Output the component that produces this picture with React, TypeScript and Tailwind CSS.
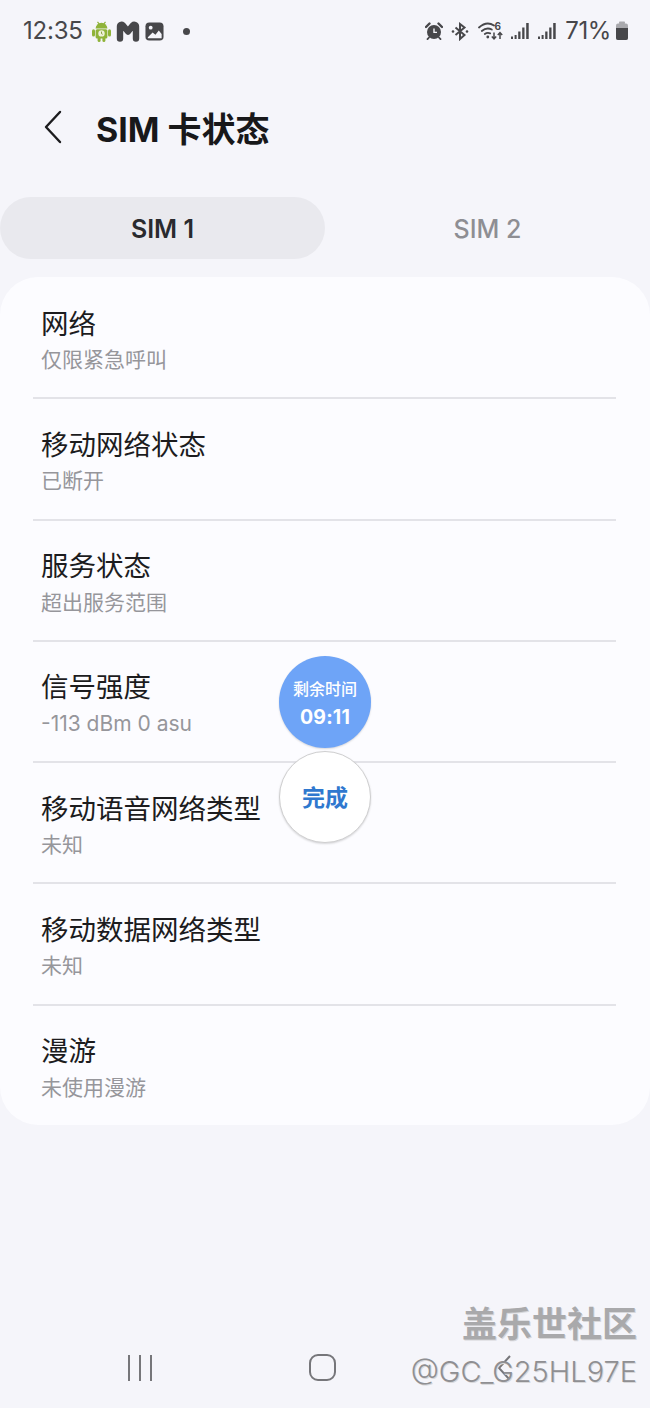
const FONT = "font-['Inter','Noto_Sans_CJK_SC',sans-serif]";

const rows = [
  { title: '网络', sub: '仅限紧急呼叫' },
  { title: '移动网络状态', sub: '已断开' },
  { title: '服务状态', sub: '超出服务范围' },
  { title: '信号强度', sub: '-113 dBm 0 asu' },
  { title: '移动语音网络类型', sub: '未知' },
  { title: '移动数据网络类型', sub: '未知' },
  { title: '漫游', sub: '未使用漫游' },
];

function AndroidIcon() {
  return (
    <svg width="19" height="21" viewBox="0 0 19 21">
      <path d="M3.6 7.6a5.9 5.9 0 0 1 11.8 0z" fill="#8fb339" />
      <path d="M5.5 0.8l1.8 2.4M13.5 0.8l-1.8 2.4" stroke="#8fb339" strokeWidth="1.2" />
      <rect x="3.6" y="8.2" width="11.8" height="9.2" rx="1.5" fill="#8fb339" />
      <rect x="0" y="8.2" width="3" height="7.4" rx="1.5" fill="#8fb339" />
      <rect x="16" y="8.2" width="3" height="7.4" rx="1.5" fill="#8fb339" />
      <rect x="5.6" y="16" width="3" height="5" rx="1.5" fill="#8fb339" />
      <rect x="10.4" y="16" width="3" height="5" rx="1.5" fill="#8fb339" />
      <circle cx="9.5" cy="12.4" r="3.2" fill="#eef0d8" />
      <path d="M9.5 10.6v2l1.2.7" stroke="#7b9a30" strokeWidth="0.9" fill="none" />
    </svg>
  );
}

function MailIcon() {
  return (
    <svg width="24" height="21" viewBox="0 0 24 21">
      <path
        d="M4 17.5V5.5c0-1.500 1.500-2.200 2.800-1.200L12 10.500l5-6.200c1.200-1.100 3-.4 3 1.200v12"
        fill="none"
        stroke="#47474a"
        strokeWidth="6.4"
        strokeLinecap="round"
        strokeLinejoin="round"
      />
    </svg>
  );
}

function PhotoIcon() {
  return (
    <svg width="19" height="19" viewBox="0 0 20 20">
      <rect x="0.5" y="0.5" width="19" height="19" rx="4" fill="#47474a" />
      <circle cx="6" cy="6" r="2" fill="#f5f5fa" />
      <path d="M3 16l5-5 3 2.500 3.500-4.500 3 3.500V17H3z" fill="#f5f5fa" />
    </svg>
  );
}

function AlarmIcon() {
  return (
    <svg width="18" height="18" viewBox="0 0 18 18">
      <circle cx="9" cy="10" r="7" fill="#47474a" />
      <path d="M1 5l3.500-3.500M17 5l-3.500-3.500" stroke="#47474a" strokeWidth="2.4" strokeLinecap="round" />
      <path d="M4 15.500l-1.500 1.700M14 15.500l1.500 1.700" stroke="#47474a" strokeWidth="1.800" strokeLinecap="round" />
      <path d="M9 6.500V10.400h3" stroke="#f5f5fa" strokeWidth="1.400" fill="none" />
    </svg>
  );
}

function BluetoothIcon() {
  return (
    <svg width="18" height="19" viewBox="0 0 18 19">
      <path d="M4.500 5.500l9 7.500L9 17V2l4.500 3.500-9 7.500" fill="none" stroke="#47474a" strokeWidth="2" />
      <circle cx="2" cy="9.500" r="1.300" fill="#47474a" />
      <circle cx="16" cy="9.500" r="1.300" fill="#47474a" />
    </svg>
  );
}

function WifiIcon() {
  return (
    <svg width="25" height="20" viewBox="0 0 25 20">
      <path d="M1 6.500C6 2 11.500 1.500 16 4.500" fill="none" stroke="#47474a" strokeWidth="1.800" strokeLinecap="round" />
      <path d="M3.800 10c3.500-3 7-3 10-1.500" fill="none" stroke="#47474a" strokeWidth="1.800" strokeLinecap="round" />
      <path d="M6.800 13c2-1.400 3.600-1.400 5.400-.6" fill="none" stroke="#47474a" strokeWidth="1.800" strokeLinecap="round" />
      <circle cx="9.800" cy="16" r="1.400" fill="#47474a" />
      <path d="M16 11.500v6.500m-2.200-2.400l2.200 2.400 2.200-2.400M22 18v-6.500m-2.200 2.400l2.200-2.400 2.200 2.400" fill="none" stroke="#47474a" strokeWidth="1.500" />
      <text x="16.500" y="8.500" fontSize="10" fontWeight="700" fill="#47474a" fontFamily="Inter, sans-serif">6</text>
    </svg>
  );
}

function SignalIcon() {
  return (
    <svg width="19" height="18" viewBox="0 0 19 18" className="text-[#47474a]">
      <rect x="0" y="14.500" width="2" height="2.500" fill="currentColor" />
      <rect x="3.600" y="13" width="2" height="4" fill="currentColor" />
      <rect x="7.200" y="9.500" width="2.300" height="7.500" fill="currentColor" />
      <rect x="11.200" y="5.500" width="2.300" height="11.500" fill="currentColor" />
      <rect x="15.200" y="1" width="2.500" height="16" fill="currentColor" />
    </svg>
  );
}

function BatteryIcon() {
  return (
    <svg width="14" height="20" viewBox="0 0 14 20">
      <rect x="4" y="0.500" width="6" height="2.500" rx="0.800" fill="#a9a9ad" />
      <rect x="1" y="2.500" width="12" height="16.500" rx="2" fill="#a9a9ad" />
      <path d="M1 7h12v10a2 2 0 0 1-2 2H3a2 2 0 0 1-2-2z" fill="#47474a" />
    </svg>
  );
}

function StatusBar() {
  return (
    <div className="flex h-[62px] items-center justify-between pl-[23px] pr-[21px]">
      <div className="flex items-center">
        <span className="w-[58px] text-[24px] tracking-[-0.2px] text-[#47474a]">12:35</span>
        <div className="ml-[11px] flex items-center gap-[5px]">
          <AndroidIcon />
          <MailIcon />
          <PhotoIcon />
        </div>
        <span className="ml-[19px] h-[7px] w-[7px] rounded-full bg-[#47474a]" />
      </div>
      <div className="flex items-center">
        <AlarmIcon />
        <div className="ml-[8px]"><BluetoothIcon /></div>
        <div className="ml-[9px]"><WifiIcon /></div>
        <div className="ml-[8px]"><SignalIcon /></div>
        <div className="ml-[8px]"><SignalIcon /></div>
        <span className="ml-[8px] text-[24px] tracking-[-0.4px] text-[#47474a]">71%</span>
        <div className="ml-[4px]"><BatteryIcon /></div>
      </div>
    </div>
  );
}

function Row({ title, sub, last }: { title: string; sub: string; last: boolean }) {
  return (
    <div className={`relative px-[41px] pt-[27.5px] ${last ? 'h-[120px]' : 'h-[121.3px]'}`}>
      <div className="text-[27.5px] leading-[38px] text-[#1c1c1e]">{title}</div>
      <div className="pt-[1.5px] text-[21px] leading-[32px] text-[#96969b]">{sub}</div>
      {!last && <div className="absolute -bottom-px left-[33px] right-[34px] h-[2px] bg-[#e3e3e8]" />}
    </div>
  );
}

export default function App() {
  return (
    <div className={`${FONT} relative h-[1408px] w-[650px] overflow-hidden bg-[#f5f5fa]`}>
      <StatusBar />

      <div className="flex h-[135px] items-center pb-[6px]">
        <svg width="20" height="34" viewBox="0 0 20 34" className="ml-[43px]">
          <path d="M17 2L3 17l14 15" fill="none" stroke="#1c1c1e" strokeWidth="2.400" strokeLinecap="round" strokeLinejoin="round" />
        </svg>
        <span className="ml-[33px] pt-[5px] text-[34px] font-bold text-[#18181a]">SIM 卡状态</span>
      </div>

      <div className="flex h-[62px]">
        <div className="flex w-[325px] items-center justify-center rounded-full bg-[#e9e9ee] pt-[3px] text-[25px] font-semibold text-[#2a2a2e]">
          SIM 1
        </div>
        <div className="flex w-[325px] items-center justify-center pt-[3px] text-[25px] font-medium text-[#8e8e93]">SIM 2</div>
      </div>

      <div className="mt-[18px] rounded-[38px] bg-[#fcfcff]">
        {rows.map((row, i) => (
          <Row key={row.title} title={row.title} sub={row.sub} last={i === rows.length - 1} />
        ))}
      </div>

      {/* floating timer */}
      <div className="absolute left-[279px] top-[656px] flex h-[92px] w-[92px] flex-col items-center justify-center rounded-full bg-[#6ea4f7] pt-[3px] text-white shadow-[0_1px_2px_rgba(0,0,0,0.15)]">
        <div className="text-[16px] font-medium leading-[20px]">剩余时间</div>
        <div className="mt-[6px] text-[19.5px] font-bold leading-[24px] tracking-[0.2px]">09:11</div>
      </div>
      <div className="absolute left-[279px] top-[751px] flex h-[92px] w-[92px] items-center justify-center rounded-full border border-[#cfcfd0] bg-white pt-[3px] text-[23px] font-bold text-[#2f78cf] shadow-[0_1px_2px_rgba(0,0,0,0.15)]">
        完成
      </div>

      {/* nav bar */}
      <div className="absolute bottom-0 left-0 right-0 flex h-[80px] items-center pb-[1px]">
        <div className="ml-[128px] flex gap-[9px]">
          <span className="h-[26px] w-[2px] bg-[#76767a]" />
          <span className="h-[26px] w-[2px] bg-[#76767a]" />
          <span className="h-[26px] w-[2px] bg-[#76767a]" />
        </div>
        <div className="ml-[157px] h-[27px] w-[27px] rounded-[9px] border-2 border-[#76767a]" />
        <svg width="16" height="28" viewBox="0 0 16 28" className="ml-[161px]">
          <path d="M13 2L2 14l11 12" fill="none" stroke="#76767a" strokeWidth="2" />
        </svg>
      </div>

      {/* watermark */}
      <div className="absolute right-[13px] top-[1303px] flex flex-col items-end text-[#a5a5a8] [text-shadow:1px_1px_0_#d8d8da]">
        <div className="text-[35px] font-semibold leading-[42px] text-[#a9a9ab]">盖乐世社区</div>
        <div className="pt-[6px] text-[29px] font-light leading-[42px] text-[#8f8f92]">@GC_G25HL97E</div>
      </div>
    </div>
  );
}
